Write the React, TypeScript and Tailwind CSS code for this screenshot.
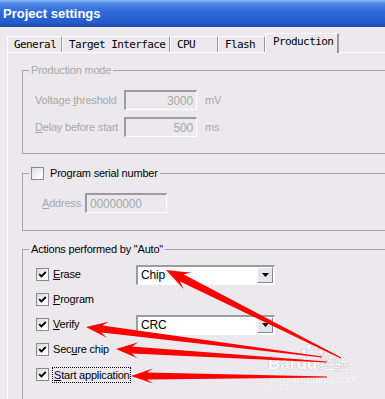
import React from 'react';

type Pt = [number, number];

const sans = "font-['Liberation_Sans',Arial,sans-serif]";

function arrowPoints(tip: Pt, tail: Pt, headLen = 19, headW = 16, shaftW = 7) {
  const dx = tail[0] - tip[0];
  const dy = tail[1] - tip[1];
  const len = Math.hypot(dx, dy);
  const ux = dx / len;
  const uy = dy / len;
  const nx = -uy;
  const ny = ux;
  const at = (along: number, side: number) =>
    `${tip[0] + ux * along + nx * side},${tip[1] + uy * along + ny * side}`;
  return [
    at(0, 0),
    at(headLen * 1.1, headW / 2),
    at(headLen * 0.8, shaftW / 2),
    at(len, 0.6),
    at(len, -0.6),
    at(headLen * 0.8, -shaftW / 2),
    at(headLen * 1.1, -headW / 2),
  ].join(' ');
}

const arrows: { tip: Pt; tail: Pt; head: number; w: number; shaft: number }[] = [
  { tip: [166, 270], tail: [341, 358], head: 22, w: 18, shaft: 8 },
  { tip: [86, 327], tail: [322, 357], head: 20, w: 16, shaft: 7 },
  { tip: [116, 349], tail: [327, 362], head: 20, w: 16, shaft: 7 },
  { tip: [131, 376], tail: [327, 377], head: 20, w: 15, shaft: 7 },
];

function U({ children }: { children: React.ReactNode }) {
  return <span className="underline underline-offset-[1px] decoration-1">{children}</span>;
}

function Checkbox({ checked }: { checked?: boolean }) {
  return (
    <span className="w-[13px] h-[13px] shrink-0 border border-[#8a8a8a] bg-[linear-gradient(135deg,#d9d9dc,#ffffff_80%)] flex items-center justify-center">
      {checked && (
        <svg width="11" height="11" viewBox="0 0 11 11">
          <path d="M2.2 5.2 L4.4 7.4 L8.8 3" stroke="#000" strokeWidth="1.8" fill="none" />
        </svg>
      )}
    </span>
  );
}

function DisabledInput({ value, w, right }: { value: string; w: string; right?: boolean }) {
  return (
    <div
      className={`${w} h-[20px] border-t-2 border-l-2 border-r border-b border-t-[#9c9c9c] border-l-[#9c9c9c] border-r-white border-b-white flex items-center px-[3px] text-[12px] text-[#a8a8a8] ${
        right ? 'justify-end' : ''
      }`}
    >
      {value}
    </div>
  );
}

function Combo({ value }: { value: string }) {
  return (
    <div className="w-[139px] h-[20px] bg-white border-t-2 border-l-2 border-r border-b border-t-[#9c9c9c] border-l-[#9c9c9c] border-r-white border-b-white flex items-center">
      <span className="flex-1 pl-[3px] text-[12px] text-black">{value}</span>
      <span className="w-[16px] h-[16px] mr-[1px] bg-[#e6e5e9] border border-t-white border-l-white border-r-[#8a8a8a] border-b-[#8a8a8a] flex items-center justify-center">
        <svg width="7" height="4" viewBox="0 0 7 4">
          <path d="M0 0 H7 L3.5 4 Z" fill="#000" />
        </svg>
      </span>
    </div>
  );
}

const tabs = [
  { label: 'General', w: 'w-[55px]' },
  { label: 'Target Interface', w: 'w-[108px]' },
  { label: 'CPU', w: 'w-[48px]' },
  { label: 'Flash', w: 'w-[47px]' },
];

const actions: { label: React.ReactNode; combo?: string; focus?: boolean }[] = [
  { label: <><U>E</U>rase</>, combo: 'Chip' },
  { label: <><U>P</U>rogram</> },
  { label: <><U>V</U>erify</>, combo: 'CRC' },
  { label: <>Sec<U>u</U>re chip</> },
  { label: <><U>S</U>tart application</>, focus: true },
];

export default function App() {
  return (
    <div className={`relative w-[385px] h-[399px] overflow-hidden bg-[#ebe9ed] ${sans} tracking-[-0.2px]`}>
      <div className="h-[27px] flex items-center pl-[3px] bg-[linear-gradient(180deg,#8ab8f5_0%,#4a86e4_14%,#2f69d8_45%,#255bcb_85%,#1b48a9_100%)]">
        <span className="text-white font-bold text-[13px] tracking-normal">Project settings</span>
      </div>

      <div className="h-[6px]" />

      <div className="h-[19px] pl-[7px] flex items-end font-['DejaVu_Sans_Mono',monospace] text-[11px] tracking-[-0.6px] text-black">
        {tabs.map((t) => (
          <div
            key={t.label}
            className={`${t.w} h-[16px] border-t border-l border-white border-r border-r-[#9a9a9a] pl-[6px] leading-[15px]`}
          >
            {t.label}
          </div>
        ))}
        <div className="relative z-10 w-[74px] h-[20px] -mb-[1px] bg-[#ebe9ed] border-t border-l border-white border-r-2 border-r-[#9a9a9a] pl-[7px] leading-[16px]">
          Production
        </div>
      </div>

      <div className="ml-[7px] border-t border-l border-white pl-[14px] text-[11px]">
        <fieldset className="mt-[11px] w-[420px] h-[90px] border border-[#a5a5a5]">
          <legend className="ml-[6px] px-[2px] leading-[13px] text-[#a8a8a8]">Production mode</legend>
          <div className="mt-[13px] pl-[12px] flex items-center h-[20px] text-[#a8a8a8]">
            <span className="w-[89px]">Voltage <U>t</U>hreshold</span>
            <DisabledInput value="3000" w="w-[73px]" right />
            <span className="ml-[8px]">mV</span>
          </div>
          <div className="mt-[7px] pl-[12px] flex items-center h-[20px] text-[#a8a8a8]">
            <span className="w-[89px]"><U>D</U>elay before start</span>
            <DisabledInput value="500" w="w-[73px]" right />
            <span className="ml-[8px]">ms</span>
          </div>
        </fieldset>

        <fieldset className="mt-[13px] w-[420px] h-[64px] border border-[#a5a5a5]">
          <legend className="ml-[6px] px-[2px] leading-[13px] flex items-center gap-[6px] text-black">
            <Checkbox />
            <span>Program serial number</span>
          </legend>
          <div className="mt-[13px] pl-[19px] flex items-center h-[20px] text-[#a8a8a8]">
            <span className="w-[43px]"><U>A</U>ddress</span>
            <DisabledInput value="00000000" w="w-[82px]" />
          </div>
        </fieldset>

        <fieldset className="mt-[12px] w-[420px] h-[200px] border border-[#a5a5a5]">
          <legend className="ml-[6px] px-[2px] leading-[13px] text-black">Actions performed by "Auto"</legend>
          <div className="mt-[6px] pl-[13px] flex flex-col text-black">
            {actions.map((a, i) => (
              <div key={i} className="h-[25px] flex items-center">
                <Checkbox checked />
                {a.focus ? (
                  <span className="ml-[3px] px-[1px] border border-dotted border-black leading-[14px]">{a.label}</span>
                ) : (
                  <span className="ml-[4px] w-[83px]">{a.label}</span>
                )}
                {a.combo && <Combo value={a.combo} />}
              </div>
            ))}
          </div>
        </fieldset>
      </div>

      <div className="absolute left-[268px] top-[343px] pointer-events-none flex flex-col items-start">
        <svg width="30" height="14" viewBox="0 0 30 14" className="ml-[30px]">
          <g fill="#ffffff" stroke="#c9c9cc" strokeWidth="0.8">
            <ellipse cx="6" cy="9" rx="2.5" ry="3" />
            <ellipse cx="11" cy="4" rx="2.5" ry="3" />
            <ellipse cx="18" cy="4" rx="2.5" ry="3" />
            <ellipse cx="23" cy="9" rx="2.5" ry="3" />
          </g>
        </svg>
        <div className="-mt-[2px] flex items-baseline text-white font-bold text-[17px] leading-[16px] tracking-normal [text-shadow:0_0_1px_#b5b5b8,0_0_1px_#b5b5b8]">
          <span>Bai</span>
          <span className="ml-[2px]">du</span>
          <span className="ml-[2px] font-['Noto_Sans_CJK_SC',sans-serif] text-[15px] font-normal">经验</span>
        </div>
        <span className="mt-[2px] text-[11px] leading-[11px] text-white tracking-normal [text-shadow:0_0_1px_#c0c0c3]">
          jingyan.baidu.com
        </span>
      </div>

      <svg className="absolute inset-0 pointer-events-none" width="385" height="399" viewBox="0 0 385 399">
        {arrows.map((a, i) => (
          <polygon key={i} points={arrowPoints(a.tip, a.tail, a.head, a.w, a.shaft)} fill="#ff0000" />
        ))}
      </svg>
    </div>
  );
}
